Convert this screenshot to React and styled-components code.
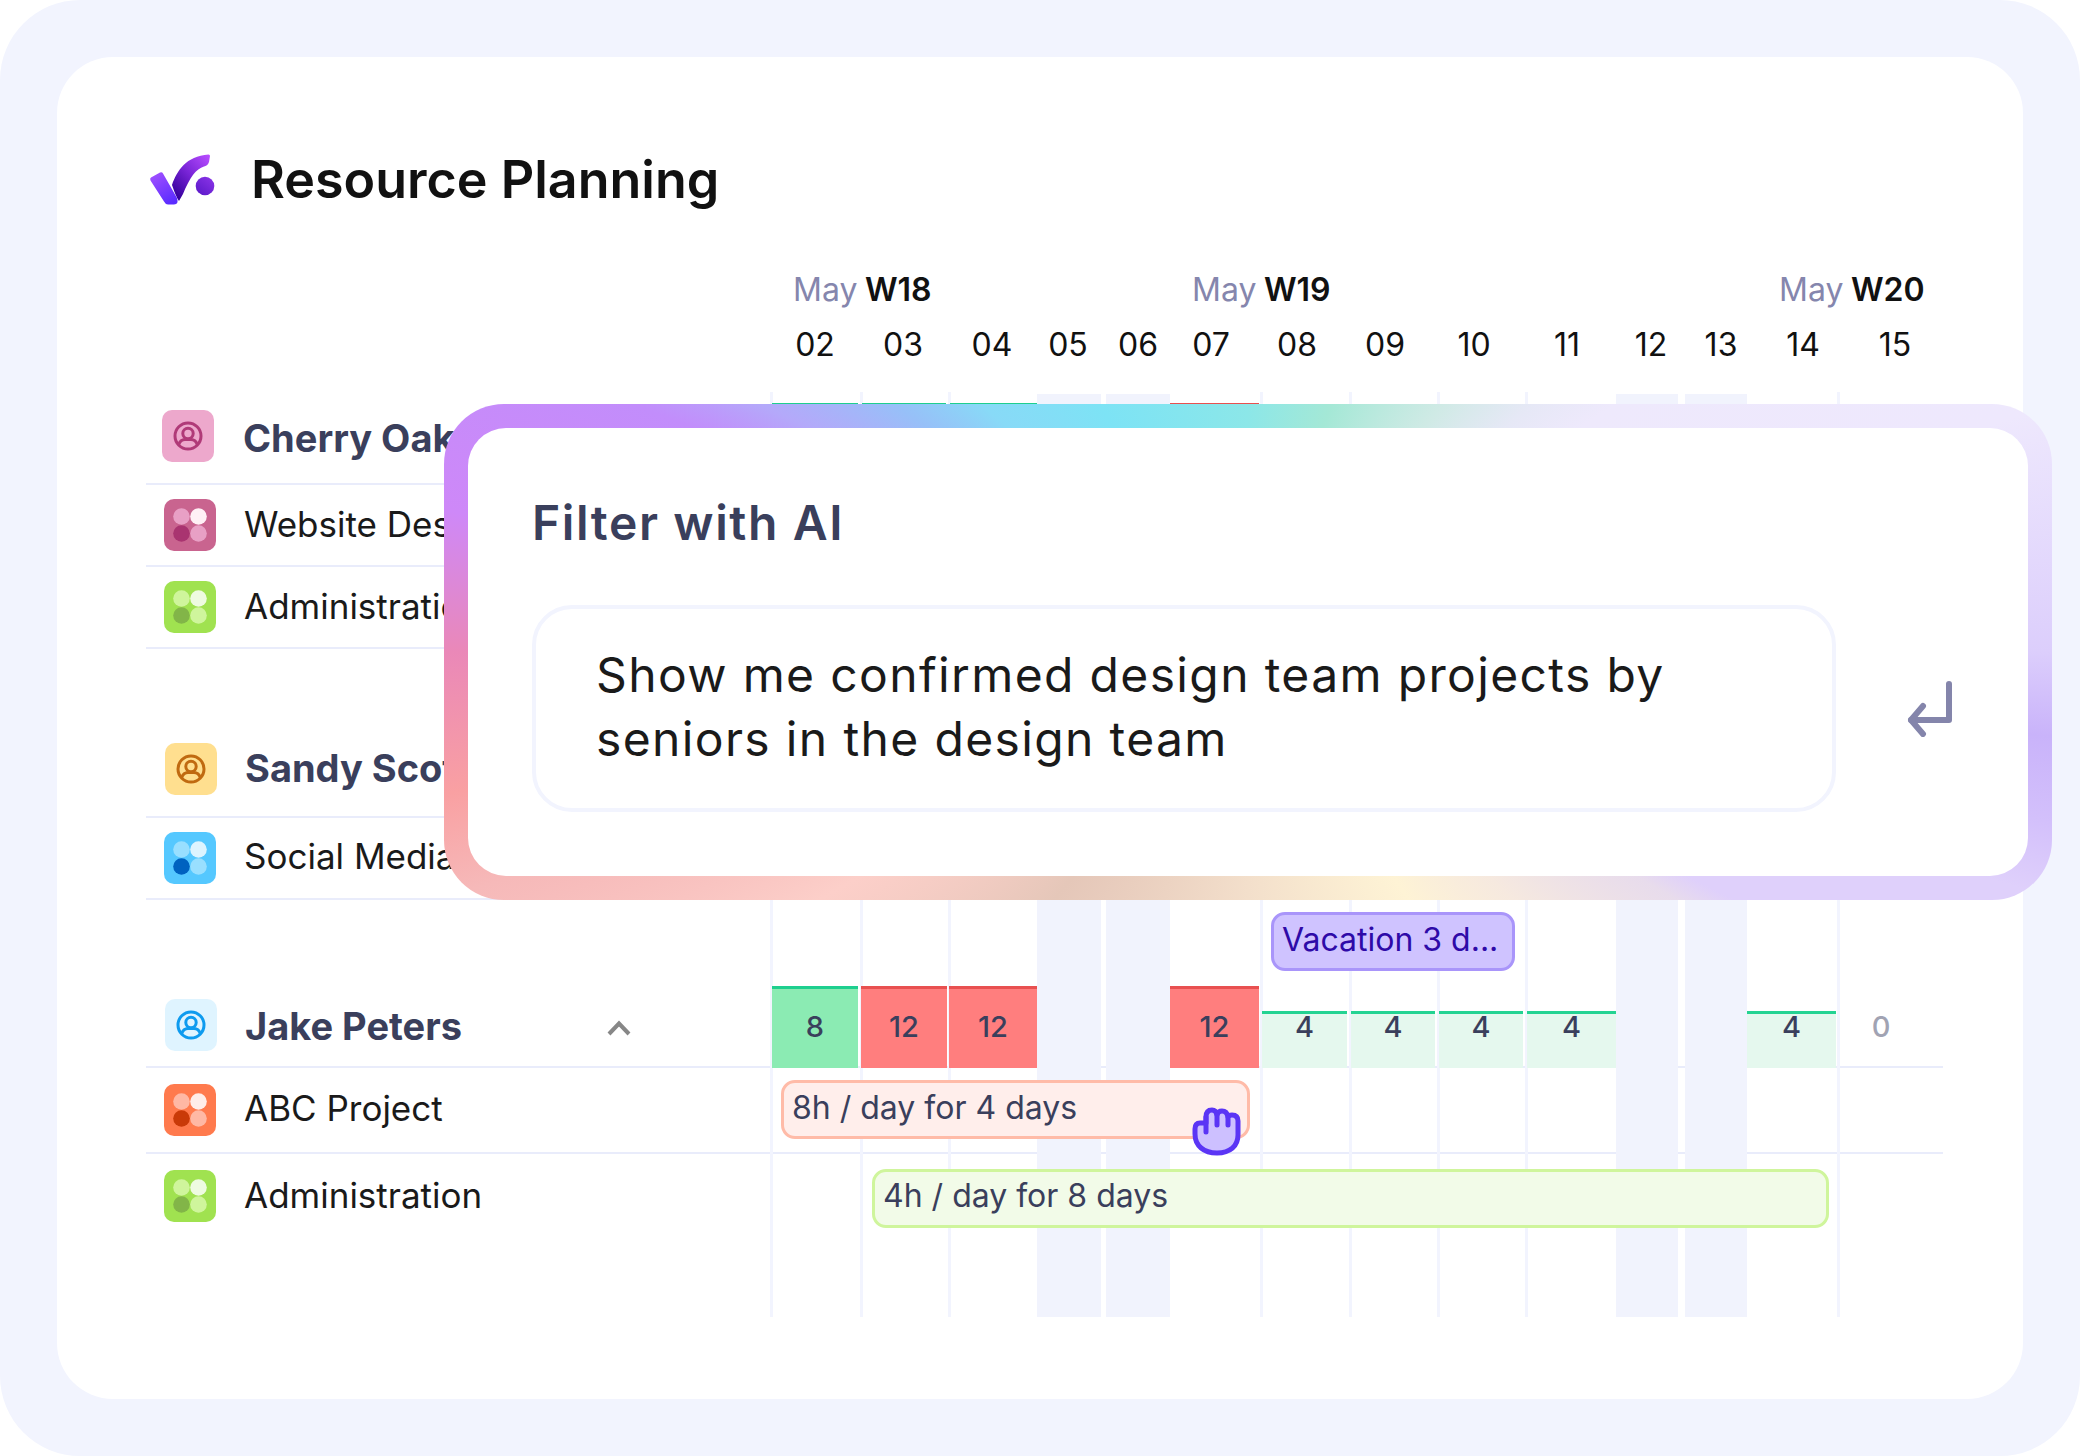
import styled, { createGlobalStyle } from "styled-components";

const COLUMNS = "90px 88px 89px 69px 64px 90px 89px 88px 88px 91px 69px 62px 90px 106px";

const GlobalStyle = createGlobalStyle`
  html, body {
    margin: 0;
    background: #fff;
  }
  body {
    font-family: Inter, "Liberation Sans", sans-serif;
  }
`;

const days = [
  { label: "02" }, { label: "03" }, { label: "04" }, { label: "05", weekend: 64 }, { label: "06", weekend: 64 },
  { label: "07", noLine: true }, { label: "08" }, { label: "09" }, { label: "10" }, { label: "11" },
  { label: "12", weekend: 62 }, { label: "13", weekend: 62 }, { label: "14", noLine: true }, { label: "15" },
];

const weeks = ["W18", "W19", "W20"];

const jakeHours = [
  { col: 1, value: 8, kind: "ok" },
  { col: 2, value: 12, kind: "over" },
  { col: 3, value: 12, kind: "over", flush: "right" },
  { col: 6, value: 12, kind: "over", flush: "left" },
  { col: 7, value: 4, kind: "low" },
  { col: 8, value: 4, kind: "low" },
  { col: 9, value: 4, kind: "low" },
  { col: 10, value: 4, kind: "low", flush: "right" },
  { col: 13, value: 4, kind: "low", flush: "left" },
];

const cherryHours = [
  { col: 1, value: 8, kind: "ok" },
  { col: 2, value: 8, kind: "ok" },
  { col: 3, value: 8, kind: "ok", flush: "right" },
  { col: 6, value: 12, kind: "over", flush: "left" },
];

const projectColors = {
  pink: ["#C9648F", "#E8A0C5", "#FFF0F5", "#A93470"],
  green: ["#A0E250", "#CFF59C", "#EEFBE0", "#82B548"],
  blue: ["#55C8FF", "#99DFFF", "#DDF4FF", "#0062C0"],
  orange: ["#FF7A4D", "#FFB8A4", "#FFEDE8", "#C93A08"],
};

const cellColors = {
  ok: { bg: "#8BEBB3", top: "#1ECF8F" },
  over: { bg: "#FF7E7E", top: "#E85050" },
  low: { bg: "#E5F8EE", top: "#24D392" },
};

function Logo() {
  return (
    <svg width="70" height="56" viewBox="18 10 70 56">
      <defs>
        <linearGradient id="logoLeft" x1="0.2" y1="0" x2="0.7" y2="1">
          <stop offset="0" stopColor="#A050FF" />
          <stop offset="1" stopColor="#5A2BFF" />
        </linearGradient>
        <linearGradient id="logoRight" x1="0.95" y1="0" x2="0.15" y2="0.95">
          <stop offset="0" stopColor="#B84DFF" />
          <stop offset="0.5" stopColor="#7A25D8" />
          <stop offset="1" stopColor="#34009A" />
        </linearGradient>
        <linearGradient id="logoDot" x1="0.9" y1="0" x2="0.1" y2="1">
          <stop offset="0" stopColor="#8B34E8" />
          <stop offset="1" stopColor="#5A18C8" />
        </linearGradient>
      </defs>
      <path
        d="M42 44 C47 30 56 15 78.5 13.5 Q80 13.5 80 15 L79 21 C78 24 76 25 74 25.5 C66 28 60 36 53 53 L49 60 Q46 56 42 44Z"
        fill="url(#logoRight)"
      />
      <path
        d="M21 36.5 L30 31.5 Q32 30.5 33 32.5 L47 57 Q49 63.5 44 63.5 L38 63.5 Q35.5 63.5 34 60.5 L20.5 39.5 Q19.5 37.5 21 36.5Z"
        fill="url(#logoLeft)"
      />
      <circle cx="75" cy="45" r="9.3" fill="url(#logoDot)" />
    </svg>
  );
}

function PersonIcon({ color }) {
  return (
    <svg width="32" height="32" viewBox="0 0 32 32" fill="none" stroke={color} strokeWidth="3">
      <circle cx="16" cy="16" r="13" />
      <circle cx="16" cy="13.5" r="5.2" />
      <path d="M6.5 25 C8 21 11 19.6 13 19.6 L19 19.6 C21 19.6 24 21 25.5 25" />
    </svg>
  );
}

function ProjectDots({ tone }) {
  const [, light, pale, dark] = projectColors[tone];
  return (
    <svg width="34" height="34" viewBox="0 0 34 34">
      <circle cx="8.5" cy="8.5" r="8.3" fill={light} />
      <circle cx="25.5" cy="8.5" r="8.3" fill={pale} />
      <circle cx="8.5" cy="25.5" r="8.3" fill={dark} />
      <circle cx="25.5" cy="25.5" r="8.3" fill={light} />
    </svg>
  );
}

function Chevron() {
  return (
    <svg width="24" height="16" viewBox="0 0 24 16" fill="none" stroke="#878787" strokeWidth="4">
      <path d="M2 14 L12 3.5 L22 14" />
    </svg>
  );
}

function ReturnIcon() {
  return (
    <svg width="46" height="56" viewBox="0 0 46 56" fill="none" stroke="#8485AB" strokeWidth="6" strokeLinecap="round" strokeLinejoin="round">
      <path d="M42 3 L42 39 L4 39" />
      <path d="M16 25 L4 39 L16 53" />
    </svg>
  );
}

function GrabHand() {
  return (
    <svg width="50" height="50" viewBox="22 17 50 50" fill="none" stroke="#5B35F5" strokeWidth="5" strokeLinecap="round" strokeLinejoin="round">
      <path
        d="M36 33 L30 33 Q25 33 25 39 L25 44 C25 56 34 63 47 63 C60 63 68 56 68 45 L68 31 Q68 25 62 25 Q59 25 58 27 Q57 21 52 21 Q48 21 47 25 Q46 20 42 20 Q36 20 36 27 Z"
        fill="#CDC0FF"
      />
      <path d="M36 27 L36 42 M47 25 L47 35 M58 27 L58 35" />
    </svg>
  );
}

function Hours({ items }) {
  return items.map((h) => (
    <Cell key={h.col} $col={h.col} $kind={h.kind} $flush={h.flush}>
      {h.value}
    </Cell>
  ));
}

export default function App() {
  return (
    <>
      <GlobalStyle />
      <Frame>
        <Card>
          <TitleRow>
            <Logo />
            <Title>Resource Planning</Title>
          </TitleRow>

          <WeekRow>
            {weeks.map((w) => (
              <Week key={w}>
                <Month>May</Month> <b>{w}</b>
              </Week>
            ))}
          </WeekRow>

          <DayRow>
            {days.map((d) => (
              <Day key={d.label}>{d.label}</Day>
            ))}
          </DayRow>

          <Timeline>
            <Stripes>
              {days.map((d) => (
                <Stripe key={d.label} $weekend={d.weekend} $noLine={d.noLine} />
              ))}
            </Stripes>

            <Row $height={95}>
              <Label>
                <PersonBadge $bg="#EDA8CC" $nudge={16}>
                  <PersonIcon color="#B03A78" />
                </PersonBadge>
                <PersonName $drop={5}>Cherry Oak</PersonName>
              </Label>
              <Hours items={cherryHours} />
            </Row>
            <Row>
              <Label>
                <ProjectBadge $bg={projectColors.pink[0]}>
                  <ProjectDots tone="pink" />
                </ProjectBadge>
                <ProjectName>Website Design</ProjectName>
              </Label>
            </Row>
            <Row>
              <Label>
                <ProjectBadge $bg={projectColors.green[0]}>
                  <ProjectDots tone="green" />
                </ProjectBadge>
                <ProjectName>Administration</ProjectName>
              </Label>
            </Row>

            <Row $height={95} $top={74}>
              <Label>
                <PersonBadge $bg="#FFDF8F">
                  <PersonIcon color="#C06A10" />
                </PersonBadge>
                <PersonName>Sandy Scott</PersonName>
              </Label>
            </Row>
            <Row>
              <Label>
                <ProjectBadge $bg={projectColors.blue[0]}>
                  <ProjectDots tone="blue" />
                </ProjectBadge>
                <ProjectName $lift={5}>Social Media</ProjectName>
              </Label>
            </Row>

            <Row $height={86} $plain>
              <Bar $from={8} $to={11} $tone="vacation" $left={11} $right={10} $top={12}>
                Vacation 3 d...
              </Bar>
            </Row>

            <Row>
              <Label>
                <PersonBadge $bg="#DFF4FF">
                  <PersonIcon color="#0E9BEF" />
                </PersonBadge>
                <PersonName $drop={2}>Jake Peters</PersonName>
                <ChevronSlot>
                  <Chevron />
                </ChevronSlot>
              </Label>
              <Hours items={jakeHours} />
              <ZeroHours>0</ZeroHours>
            </Row>
            <Row $height={86}>
              <Label>
                <ProjectBadge $bg={projectColors.orange[0]}>
                  <ProjectDots tone="orange" />
                </ProjectBadge>
                <ProjectName $lift={5}>ABC Project</ProjectName>
              </Label>
              <Bar $from={2} $to={8} $tone="pink" $left={11} $right={10} $top={12}>
                8h / day for 4 days
                <HandSlot>
                  <GrabHand />
                </HandSlot>
              </Bar>
            </Row>
            <Row $height={86} $plain>
              <Label>
                <ProjectBadge $bg={projectColors.green[0]}>
                  <ProjectDots tone="green" />
                </ProjectBadge>
                <ProjectName>Administration</ProjectName>
              </Label>
              <Bar $from={3} $to={15} $tone="green" $left={12} $right={8} $top={15} $lineHeight={48}>
                4h / day for 8 days
              </Bar>
            </Row>
          </Timeline>
        </Card>

        <FilterPopover>
          <FilterInner>
            <FilterTitle>Filter with AI</FilterTitle>
            <PromptRow>
              <PromptBox>
                Show me confirmed design team projects by
                <br />
                seniors in the design team
              </PromptBox>
              <ReturnSlot>
                <ReturnIcon />
              </ReturnSlot>
            </PromptRow>
          </FilterInner>
        </FilterPopover>
      </Frame>
    </>
  );
}

const Frame = styled.div`
  position: relative;
  box-sizing: border-box;
  width: 2080px;
  height: 1456px;
  padding: 57px;
  background: #f2f4fe;
  border-radius: 80px;
  overflow: hidden;
`;

const Card = styled.div`
  box-sizing: border-box;
  height: 1342px;
  padding: 94px 80px 0 89px;
  background: #fff;
  border-radius: 56px;
`;

const TitleRow = styled.div`
  display: flex;
  align-items: center;
  gap: 33px;
  height: 56px;
  padding-left: 2px;
`;

const Title = styled.h1`
  margin: 0;
  font-size: 52px;
  font-weight: 600;
  color: #111;
`;

const WeekRow = styled.div`
  display: grid;
  grid-template-columns: 399px 587px auto;
  height: 40px;
  margin: 63px 0 0 647px;
`;

const Week = styled.div`
  font-size: 32px;
  line-height: 40px;
  word-spacing: -1.5px;
  color: #111;
  white-space: nowrap;
  b {
    font-weight: 600;
  }
`;

const Month = styled.span`
  color: #8586ad;
`;

const DayRow = styled.div`
  display: grid;
  grid-template-columns: 88px 88px 90px 62px 78px 68px 104px 72px 106px 80px 88px 52px 112px 72px;
  height: 40px;
  margin: 15px 0 0 625px;
`;

const Day = styled.div`
  font-size: 32px;
  line-height: 40px;
  text-align: center;
  color: #111;
`;

const Timeline = styled.div`
  position: relative;
  height: 927px;
  margin-top: 25px;
`;

const Stripes = styled.div`
  position: absolute;
  top: 2px;
  bottom: 0;
  left: 624px;
  right: 0;
  z-index: 1;
  display: grid;
  grid-template-columns: ${COLUMNS};
`;

const Stripe = styled.div`
  ${(p) => p.$weekend && `width: ${p.$weekend}px; margin-top: 2px; background: #f1f3fd;`}
  ${(p) => !p.$weekend && !p.$noLine && "border-left: 3px solid #f2f4fe;"}
`;

const Row = styled.div`
  box-sizing: border-box;
  display: grid;
  grid-template-columns: 624px ${COLUMNS};
  grid-template-rows: 100%;
  height: ${(p) => p.$height || 82}px;
  margin-top: ${(p) => p.$top || 0}px;
  border-bottom: 2px solid ${(p) => (p.$plain ? "transparent" : "#e9ecfb")};
`;

const Label = styled.div`
  grid-column: 1;
  grid-row: 1;
  display: flex;
  align-items: center;
  min-width: 0;
  white-space: nowrap;
`;

const PersonBadge = styled.div`
  display: flex;
  align-items: center;
  justify-content: center;
  flex: none;
  width: 52px;
  height: 52px;
  margin: -2px ${(p) => (p.$nudge ? 29 : 28)}px 0 ${(p) => p.$nudge || 19}px;
  background: ${(p) => p.$bg};
  border-radius: 10px;
`;

const ProjectBadge = styled.div`
  display: flex;
  align-items: center;
  justify-content: center;
  flex: none;
  width: 52px;
  height: 52px;
  margin: -1px 28px 0 18px;
  background: ${(p) => p.$bg};
  border-radius: 10px;
`;

const PersonName = styled.span`
  margin-top: ${(p) => p.$drop || 0}px;
  padding-bottom: 3px;
  font-size: 38px;
  font-weight: 700;
  color: #3a3f5c;
`;

const ProjectName = styled.span`
  padding-bottom: ${(p) => p.$lift || 3}px;
  font-size: 35px;
  color: #1a1a1a;
`;

const ChevronSlot = styled.span`
  display: flex;
  margin: 3px 139px 0 auto;
`;

const Cell = styled.div`
  position: relative;
  z-index: 2;
  grid-row: 1;
  grid-column: ${(p) => p.$col + 1};
  align-self: end;
  box-sizing: border-box;
  height: ${(p) => (p.$kind === "low" ? 57 : 82)}px;
  margin: 0 ${(p) => (p.$flush === "right" ? 0 : p.$kind === "over" || p.$flush ? 1 : 2)}px -2px
    ${(p) => (p.$flush === "left" ? 0 : p.$kind === "over" ? 1 : 2)}px;
  background: ${(p) => cellColors[p.$kind].bg};
  border-top: 3px solid ${(p) => cellColors[p.$kind].top};
  font-size: 29px;
  font-weight: 500;
  line-height: ${(p) => (p.$kind === "low" ? 26 : 76)}px;
  text-align: center;
  color: #3a3f5c;
`;

const ZeroHours = styled.div`
  position: relative;
  z-index: 2;
  grid-row: 1;
  grid-column: 15;
  padding-right: 18px;
  font-size: 29px;
  font-weight: 500;
  line-height: 81px;
  text-align: center;
  color: #a1a3b3;
`;

const barTones = {
  vacation: { bg: "#cfc3ff", border: "#a995fa", text: "#2e0aa8" },
  pink: { bg: "#ffeeeb", border: "#ffbba8", text: "#3a3f5c" },
  green: { bg: "#f2fbe8", border: "#cff59c", text: "#3a3f5c" },
};

const Bar = styled.div`
  position: relative;
  z-index: 2;
  grid-row: 1;
  grid-column: ${(p) => p.$from} / ${(p) => p.$to};
  align-self: start;
  box-sizing: border-box;
  height: 59px;
  margin: ${(p) => p.$top}px ${(p) => p.$right}px 0 ${(p) => p.$left}px;
  padding: 0 8px;
  background: ${(p) => barTones[p.$tone].bg};
  border: 3px solid ${(p) => barTones[p.$tone].border};
  border-radius: 14px;
  font-size: 32px;
  line-height: ${(p) => p.$lineHeight || 50}px;
  color: ${(p) => barTones[p.$tone].text};
  white-space: nowrap;
`;

const HandSlot = styled.span`
  position: absolute;
  top: 24px;
  right: 5px;
  display: flex;
`;

const FilterPopover = styled.div`
  position: absolute;
  top: 404px;
  left: 444px;
  z-index: 3;
  box-sizing: border-box;
  width: 1608px;
  height: 496px;
  padding: 24px;
  border-radius: 60px;
  background: conic-gradient(
    from 0deg at 50% 50%,
    #8ce7e8 0deg,
    #a4e8d6 18.5deg,
    #cfeae5 38deg,
    #e6e8f6 49deg,
    #eee9fc 56deg,
    #eee8fd 73deg,
    #dccefc 90deg,
    #c9b3fa 96deg,
    #d3c0fb 102deg,
    #dfd0fb 107deg,
    #dfd0fb 117deg,
    #e8dcec 120deg,
    #f6e9df 133deg,
    #fef3d5 147deg,
    #f3dfcb 180deg,
    #e5c7b9 218deg,
    #fccfc9 240deg,
    #f6b9b9 253deg,
    #f9a0a2 260deg,
    #ea88b8 270deg,
    #ce88f8 280deg,
    #c28dfb 292deg,
    #b4a9fa 297deg,
    #97c0f8 305deg,
    #88daf7 313deg,
    #7de3f5 329deg,
    #8ce7e8 360deg
  );
`;

const FilterInner = styled.div`
  box-sizing: border-box;
  height: 100%;
  padding: 65px 0 0 64px;
  background: #fff;
  border-radius: 38px;
`;

const FilterTitle = styled.h2`
  margin: 0 0 52px;
  font-size: 48px;
  font-weight: 600;
  line-height: 60px;
  letter-spacing: 1.6px;
  color: #3a3f5c;
`;

const PromptRow = styled.div`
  display: flex;
  align-items: center;
`;

const PromptBox = styled.div`
  box-sizing: border-box;
  width: 1304px;
  height: 207px;
  padding: 34px 0 0 60px;
  border: 4px solid #f2f4fe;
  border-radius: 40px;
  font-size: 48px;
  line-height: 64px;
  letter-spacing: 1.36px;
  color: #1a1a1a;
`;

const ReturnSlot = styled.div`
  display: flex;
  margin-left: 71px;
`;
